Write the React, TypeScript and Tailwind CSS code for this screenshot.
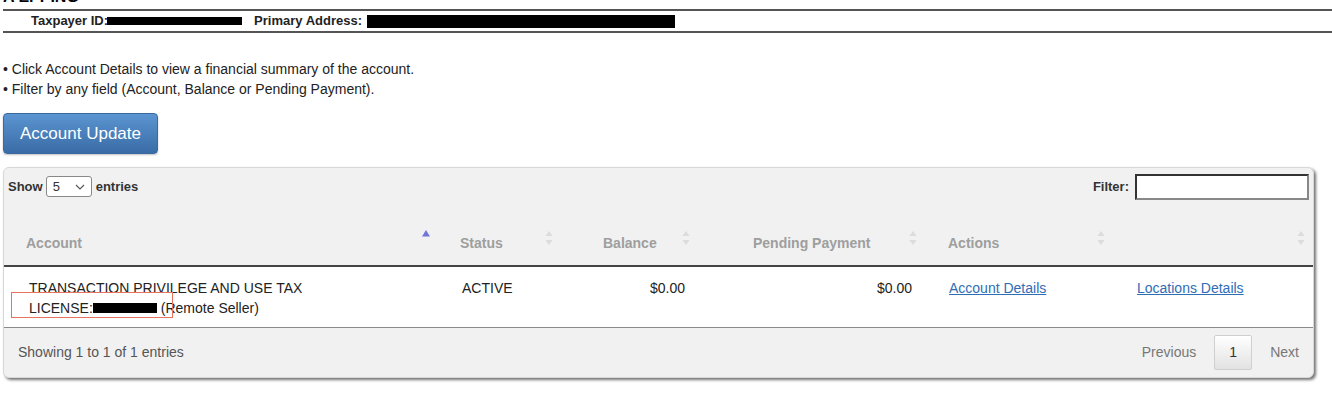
const font = { fontFamily: '"Liberation Sans", Arial, sans-serif' };

function SortBoth() {
  return (
    <svg width="8" height="16" viewBox="0 0 8 16" className="absolute right-[8px] top-[30px]">
      <path d="M4 1 L7.5 6 L0.5 6 Z" fill="#dcdcdc" />
      <path d="M4 15 L7.5 10 L0.5 10 Z" fill="#dcdcdc" />
    </svg>
  );
}

function SortAsc() {
  return (
    <svg width="8" height="16" viewBox="0 0 8 16" className="absolute right-[8px] top-[29px]">
      <path d="M4 1 L8 7.5 L0 7.5 Z" fill="#7373dc" />
    </svg>
  );
}

const cols = [
  { w: "w-[434px]", head: "Account", hpl: "pl-[22px]", sort: "asc" },
  { w: "w-[123px]", head: "Status", hpl: "pl-[22px]", sort: "both" },
  { w: "w-[137px]", head: "Balance", hpl: "pl-[42px]", sort: "both" },
  { w: "w-[227px]", head: "Pending Payment", hpl: "pl-[55px]", sort: "both" },
  { w: "w-[188px]", head: "Actions", hpl: "pl-[23px]", sort: "both" },
  { w: "w-[200px]", head: "", hpl: "pl-[23px]", sort: "both" },
];

export default function App() {
  return (
    <div className="bg-white w-[1332px] h-[394px] overflow-hidden text-[#222]" style={font}>
      {/* cut off page heading */}
      <div className="h-[9px] overflow-hidden pl-[3px]">
        <div className="text-[16px] font-bold leading-[16px] mt-[-11px] text-black">A EPPING</div>
      </div>
      <div className="ml-[3px] border-t-2 border-b-2 border-[#555] h-[24px] flex items-center pl-[28px] text-[13px] font-bold">
        <span>Taxpayer ID:</span>
        <span className="inline-block w-[135px] h-[8px] bg-black ml-[-1px]"></span>
        <span className="ml-[12px]">Primary Address:</span>
        <span className="inline-block w-[308px] h-[13px] bg-black ml-[5px]"></span>
      </div>

      <div className="pl-[3px] mt-[26px] text-[14px] leading-[20px]">
        <div>• Click Account Details to view a financial summary of the account.</div>
        <div>• Filter by any field (Account, Balance or Pending Payment).</div>
      </div>

      <button className="ml-[3px] mt-[14px] w-[155px] h-[41px] rounded-[4px] border border-[#3a6aa0] bg-gradient-to-b from-[#5b95d1] to-[#3a6ca6] text-white text-[17px] shadow-[0_1px_2px_rgba(0,0,0,0.25)]">
        Account Update
      </button>

      <div className="relative ml-[3px] mt-[13px] w-[1311px] rounded-[6px] border border-[#d8d8d8] bg-[#f1f1f1] shadow-[2px_2px_3px_rgba(0,0,0,0.55)]">
        {/* show / filter bar */}
        <div className="flex items-center justify-between h-[32px] pt-[5px] pl-[4px] pr-[4px]">
          <div className="flex items-center text-[13px] font-bold text-[#333]">
            <span>Show</span>
            <div className="ml-[3px] w-[46px] h-[21px] rounded-[3px] border border-[#888] bg-white flex items-center justify-between px-[6px] font-normal text-[13px]">
              <span>5</span>
              <svg width="10" height="6" viewBox="0 0 10 6">
                <path d="M1 1 L5 5 L9 1" stroke="#555" strokeWidth="1.1" fill="none" />
              </svg>
            </div>
            <span className="ml-[4px]">entries</span>
          </div>
          <div className="flex items-center text-[13px] font-bold text-[#333]">
            <span>Filter:</span>
            <div className="ml-[6px] w-[174px] h-[26px] bg-white border-2 border-[#333] border-b-[#888] border-r-[#888]"></div>
          </div>
        </div>

        {/* header */}
        <div className="flex h-[67px] border-b-2 border-[#444]">
          {cols.map((c, i) => (
            <div key={i} className={`relative ${c.w} ${c.hpl} flex items-end pb-[12px] text-[14px] font-bold text-[#9e9e9e] leading-[20px]`}>
              <span>{c.head}</span>
              {c.sort === "asc" ? <SortAsc /> : <SortBoth />}
            </div>
          ))}
        </div>

        {/* body row */}
        <div className="flex h-[61px] bg-white border-b border-[#8a8a8a] text-[14px] leading-[20px] pt-[11px]">
          <div className="w-[434px] pl-[25px]">
            <div>TRANSACTION PRIVILEGE AND USE TAX</div>
            <div className="flex items-center">
              <span>LICENSE:</span>
              <span className="inline-block w-[64px] h-[10px] bg-black"></span>
              <span className="ml-[4px]">(Remote Seller)</span>
            </div>
          </div>
          <div className="w-[123px] pl-[24px]">ACTIVE</div>
          <div className="w-[137px] pr-[13px] text-right">$0.00</div>
          <div className="w-[227px] pr-[13px] text-right">$0.00</div>
          <div className="w-[188px] pl-[24px]">
            <a href="#" className="text-[#2f6db5] underline">Account Details</a>
          </div>
          <div className="w-[200px] pl-[24px]">
            <a href="#" className="text-[#2f6db5] underline">Locations Details</a>
          </div>
        </div>

        {/* footer */}
        <div className="flex items-center justify-between h-[49px] pl-[14px] pr-[14px] text-[14px] text-[#555]">
          <span>Showing 1 to 1 of 1 entries</span>
          <div className="flex items-center text-[#777]">
            <span>Previous</span>
            <span className="ml-[18px] w-[38px] h-[35px] flex items-center justify-center border border-[#cfcfcf] rounded-[2px] bg-gradient-to-b from-white to-[#e2e2e2] text-[#333]">1</span>
            <span className="ml-[18px]">Next</span>
          </div>
        </div>

        {/* highlight box */}
        <div className="absolute left-[7px] top-[124px] w-[162px] h-[26px] border border-[#e8735c]"></div>
      </div>
    </div>
  );
}
